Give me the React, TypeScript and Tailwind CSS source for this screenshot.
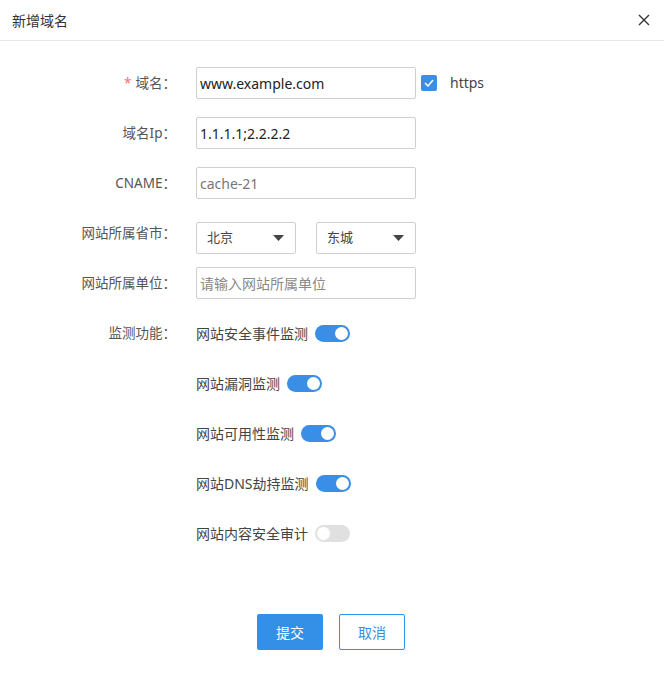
import React from "react";

const font = { fontFamily: '"Noto Sans", "Noto Sans CJK SC", sans-serif' };

function Toggle({ on }: { on: boolean }) {
  return on ? (
    <span className="relative inline-block w-[35px] h-[17px] rounded-full bg-[#3a8ee6] ml-[7px]">
      <span className="absolute right-[2px] top-[2px] w-[13px] h-[13px] rounded-full bg-white" />
    </span>
  ) : (
    <span className="relative inline-block w-[35px] h-[17px] rounded-full bg-[#e0e0e0] ml-[7px]">
      <span className="absolute left-[1px] top-[1px] w-[15px] h-[15px] rounded-full bg-white border border-[#e0e0e0]" />
    </span>
  );
}

function Label({ children, req }: { children: React.ReactNode; req?: boolean }) {
  return (
    <div className="w-[196px] shrink-0 pr-[20px] text-right text-[13.5px] text-[#555] leading-[32px] h-[32px]">
      {req && <span className="text-[#f56c6c] mr-[4px]">*</span>}
      {children}
    </div>
  );
}

function Select({ value }: { value: string }) {
  return (
    <div className="mt-[5px] w-[100px] h-[32px] border border-[#cfcfcf] rounded-[2px] flex items-center justify-between pl-[10px] pr-[11px]">
      <span className="text-[13px] text-[#444]">{value}</span>
      <svg width="11" height="6" viewBox="0 0 11 6"><path d="M0 0h11L5.5 6z" fill="#444" /></svg>
    </div>
  );
}

export default function App() {
  const toggles: [string, boolean][] = [
    ["网站安全事件监测", true],
    ["网站漏洞监测", true],
    ["网站可用性监测", true],
    ["网站DNS劫持监测", true],
    ["网站内容安全审计", false],
  ];
  return (
    <div className="w-[664px] h-[678px] bg-white" style={font}>
      <div className="h-[41px] border-b border-[#e8e8e8] flex items-center justify-between pl-[12px] pr-[14px]">
        <span className="text-[14px] text-[#333]">新增域名</span>
        <svg width="12" height="12" viewBox="0 0 12 12"><path d="M1 1l10 10M11 1L1 11" stroke="#333" strokeWidth="1.4" /></svg>
      </div>
      <div className="pt-[26px] flex flex-col gap-[18px]">
        <div className="flex">
          <Label req>域名：</Label>
          <div className="w-[220px] h-[32px] border border-[#cfcfcf] rounded-[2px] px-[3px] flex items-center text-[14px] text-[#222]">www.example.com</div>
          <div className="ml-[5px] w-[16px] h-[16px] mt-[8px] rounded-[2px] bg-[#3a8ee6] flex items-center justify-center">
            <svg width="10" height="8" viewBox="0 0 10 8"><path d="M1 4l3 3 5-6" stroke="#fff" strokeWidth="1.5" fill="none" /></svg>
          </div>
          <span className="ml-[13px] leading-[32px] text-[14px] text-[#444]">https</span>
        </div>
        <div className="flex">
          <Label>域名Ip：</Label>
          <div className="w-[220px] h-[32px] border border-[#cfcfcf] rounded-[2px] px-[3px] flex items-center text-[14px] text-[#222]">1.1.1.1;2.2.2.2</div>
        </div>
        <div className="flex">
          <Label>CNAME：</Label>
          <div className="w-[220px] h-[32px] border border-[#cfcfcf] rounded-[2px] px-[3px] flex items-center text-[14px] text-[#777]">cache-21</div>
        </div>
        <div className="flex h-[32px]">
          <Label>网站所属省市：</Label>
          <div className="flex gap-[20px]">
            <Select value="北京" />
            <Select value="东城" />
          </div>
        </div>
        <div className="flex">
          <Label>网站所属单位：</Label>
          <div className="w-[220px] h-[32px] border border-[#cfcfcf] rounded-[2px] px-[3px] flex items-center text-[14px] text-[#888]">请输入网站所属单位</div>
        </div>
        {toggles.map(([t, on], i) => (
          <div className="flex" key={t}>
            <Label>{i === 0 ? "监测功能：" : ""}</Label>
            <div className="flex items-center h-[32px]">
              <span className="text-[14px] text-[#444]">{t}</span>
              <Toggle on={on} />
            </div>
          </div>
        ))}
      </div>
      <div className="mt-[65px] flex justify-center gap-[16px] pr-[2px]">
        <button className="w-[66px] h-[36px] rounded-[2px] bg-[#348fe6] text-white text-[14px]">提交</button>
        <button className="w-[66px] h-[36px] rounded-[2px] border border-[#348fe6] bg-white text-[#348fe6] text-[14px]">取消</button>
      </div>
    </div>
  );
}
